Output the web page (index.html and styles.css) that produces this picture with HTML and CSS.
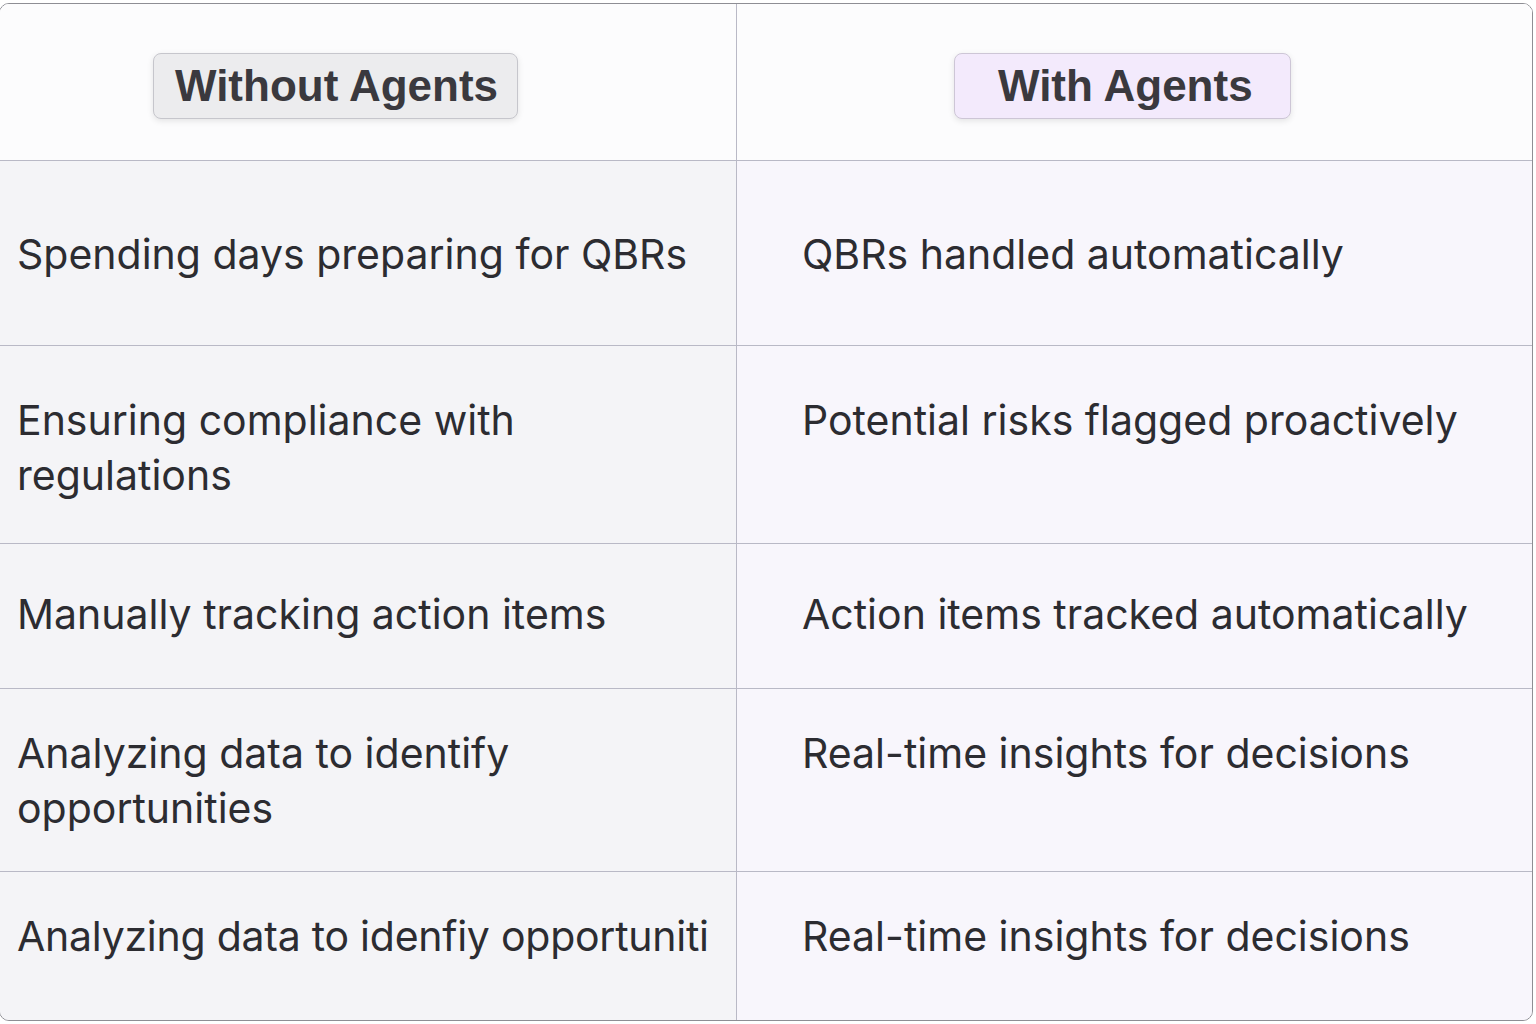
FILE: index.html
```html
<!DOCTYPE html>
<html lang="en">
<head>
<meta charset="utf-8">
<title>Without Agents vs With Agents</title>
<link rel="stylesheet" href="styles.css">
</head>
<body>
<div class="table">
  <div class="row head">
    <div class="cell left"><span class="badge gray">Without Agents</span></div>
    <div class="cell right"><span class="badge purple">With Agents</span></div>
  </div>
  <div class="row r1">
    <div class="cell left">Spending days preparing for QBRs</div>
    <div class="cell right">QBRs handled automatically</div>
  </div>
  <div class="row r2">
    <div class="cell left">Ensuring compliance with<br>regulations</div>
    <div class="cell right">Potential risks flagged proactively</div>
  </div>
  <div class="row r3">
    <div class="cell left">Manually tracking action items</div>
    <div class="cell right">Action items tracked automatically</div>
  </div>
  <div class="row r4">
    <div class="cell left">Analyzing data to identify<br>opportunities</div>
    <div class="cell right">Real-time insights for decisions</div>
  </div>
  <div class="row r5">
    <div class="cell left tight">Analyzing data to idenfiy opportuniti</div>
    <div class="cell right">Real-time insights for decisions</div>
  </div>
</div>
</body>
</html>
```

FILE: styles.css
```css
html, body {
  margin: 0;
  padding: 0;
  background: #ffffff;
}
body {
  font-family: Inter, "Noto Sans", "Liberation Sans", sans-serif;
  color: #2c2c31;
  overflow: hidden;
}
.table {
  margin: 3px 0 0 -1px;
  width: 1532px;
  border: 1px solid #8e8e94;
  border-radius: 10px;
  overflow: hidden;
  background: #f4f4f7;
}
.row {
  display: grid;
  grid-template-columns: 737px 1fr;
  border-top: 1px solid #b9b9c6;
  box-sizing: border-box;
}
.row.head {
  border-top: none;
  height: 156px;
  background: #fcfcfd;
}
.cell {
  box-sizing: border-box;
  font-size: 41px;
  line-height: 55px;
  white-space: nowrap;
}
.cell.tight {
  letter-spacing: -0.25px;
}
.cell.left {
  border-right: 1px solid #b9b9c6;
  padding-left: 17px;
  background: #f4f4f7;
}
.cell.right {
  padding-left: 65px;
  background: #f8f6fc;
}
.head .cell {
  background: #fcfcfd;
  padding-top: 49px;
}
.head .cell.left { padding-left: 153px; }
.head .cell.right { padding-left: 217px; }
.badge {
  display: inline-block;
  height: 66px;
  box-sizing: border-box;
  border: 1px solid #c6c6cc;
  border-radius: 8px;
  font-family: "Liberation Sans", Arial, sans-serif;
  font-weight: 700;
  font-size: 44px;
  line-height: 64px;
  color: #3a393e;
  box-shadow: 0 2px 6px rgba(0, 0, 0, 0.1);
}
.badge.gray {
  background: #ececee;
  padding: 0 19px 0 21px;
}
.badge.purple {
  background: #f3eafc;
  border-color: #cdc6d6;
  padding: 0 37px 0 43px;
}
.r1 { height: 185px; }
.r1 .cell { padding-top: 66px; }
.r2 { height: 198px; }
.r2 .cell { padding-top: 47px; }
.r3 { height: 145px; }
.r3 .cell { padding-top: 43px; }
.r4 { height: 183px; }
.r4 .cell { padding-top: 37px; }
.r5 { height: 149px; }
.r5 .cell { padding-top: 37px; }
```
